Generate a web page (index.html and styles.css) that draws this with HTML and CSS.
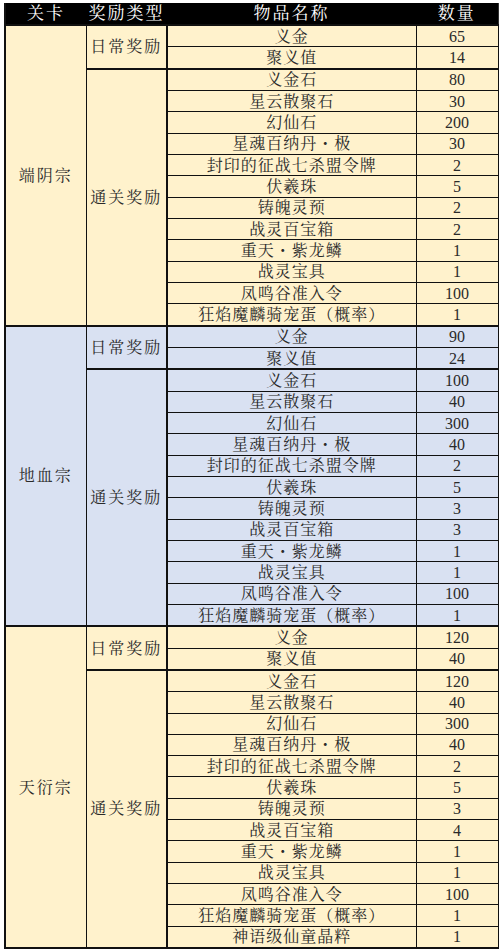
FILE: index.html
```html
<!DOCTYPE html>
<html lang="zh-CN">
<head>
<meta charset="utf-8">
<link rel="stylesheet" href="styles.css">
</head>
<body>
<table class="rewards">
<colgroup><col class="c1"><col class="c2"><col class="c3"><col class="c4"></colgroup>
<thead>
<tr><th>关卡</th><th>奖励类型</th><th>物品名称</th><th>数量</th></tr>
</thead>
<tbody class="sec yellow">
<tr><td class="stage" rowspan="14">端阴宗</td><td class="type" rowspan="2">日常奖励</td><td>义金</td><td class="num">65</td></tr>
<tr><td>聚义值</td><td class="num">14</td></tr>
<tr class="grp"><td class="type" rowspan="12">通关奖励</td><td>义金石</td><td class="num">80</td></tr>
<tr><td>星云散聚石</td><td class="num">30</td></tr>
<tr><td>幻仙石</td><td class="num">200</td></tr>
<tr><td>星魂百纳丹・极</td><td class="num">30</td></tr>
<tr><td>封印的征战七杀盟令牌</td><td class="num">2</td></tr>
<tr><td>伏羲珠</td><td class="num">5</td></tr>
<tr><td>铸魄灵预</td><td class="num">2</td></tr>
<tr><td>战灵百宝箱</td><td class="num">2</td></tr>
<tr><td>重天・紫龙鳞</td><td class="num">1</td></tr>
<tr><td>战灵宝具</td><td class="num">1</td></tr>
<tr><td>凤鸣谷准入令</td><td class="num">100</td></tr>
<tr><td>狂焰魔麟骑宠蛋（概率）</td><td class="num">1</td></tr>
</tbody>
<tbody class="sec blue">
<tr><td class="stage" rowspan="14">地血宗</td><td class="type" rowspan="2">日常奖励</td><td>义金</td><td class="num">90</td></tr>
<tr><td>聚义值</td><td class="num">24</td></tr>
<tr class="grp"><td class="type" rowspan="12">通关奖励</td><td>义金石</td><td class="num">100</td></tr>
<tr><td>星云散聚石</td><td class="num">40</td></tr>
<tr><td>幻仙石</td><td class="num">300</td></tr>
<tr><td>星魂百纳丹・极</td><td class="num">40</td></tr>
<tr><td>封印的征战七杀盟令牌</td><td class="num">2</td></tr>
<tr><td>伏羲珠</td><td class="num">5</td></tr>
<tr><td>铸魄灵预</td><td class="num">3</td></tr>
<tr><td>战灵百宝箱</td><td class="num">3</td></tr>
<tr><td>重天・紫龙鳞</td><td class="num">1</td></tr>
<tr><td>战灵宝具</td><td class="num">1</td></tr>
<tr><td>凤鸣谷准入令</td><td class="num">100</td></tr>
<tr><td>狂焰魔麟骑宠蛋（概率）</td><td class="num">1</td></tr>
</tbody>
<tbody class="sec yellow">
<tr><td class="stage" rowspan="15">天衍宗</td><td class="type" rowspan="2">日常奖励</td><td>义金</td><td class="num">120</td></tr>
<tr><td>聚义值</td><td class="num">40</td></tr>
<tr class="grp"><td class="type" rowspan="13">通关奖励</td><td>义金石</td><td class="num">120</td></tr>
<tr><td>星云散聚石</td><td class="num">40</td></tr>
<tr><td>幻仙石</td><td class="num">300</td></tr>
<tr><td>星魂百纳丹・极</td><td class="num">40</td></tr>
<tr><td>封印的征战七杀盟令牌</td><td class="num">2</td></tr>
<tr><td>伏羲珠</td><td class="num">5</td></tr>
<tr><td>铸魄灵预</td><td class="num">3</td></tr>
<tr><td>战灵百宝箱</td><td class="num">4</td></tr>
<tr><td>重天・紫龙鳞</td><td class="num">1</td></tr>
<tr><td>战灵宝具</td><td class="num">1</td></tr>
<tr><td>凤鸣谷准入令</td><td class="num">100</td></tr>
<tr><td>狂焰魔麟骑宠蛋（概率）</td><td class="num">1</td></tr>
<tr><td>神语级仙童晶粹</td><td class="num">1</td></tr>
</tbody>
</table>
</body>
</html>
```
FILE: styles.css
```css
html, body {
  margin: 0;
  padding: 0;
  background: #ffffff;
}
body {
  padding: 3px 0 0 4px;
}
.rewards {
  border-collapse: collapse;
  table-layout: fixed;
  width: 493px;
  font-family: "Liberation Serif", "Noto Serif CJK SC", "Noto Sans CJK SC", serif;
  font-size: 16px;
  color: #2a2a2a;
  border: 2px solid #111;
  border-top: 0;
  border-right: 1px solid #333;
}
.c1 { width: 81px; }
.c2 { width: 81px; }
.c3 { width: 249px; }
.c4 { width: 82px; }
.rewards th {
  background: #000;
  color: #fff;
  height: 21px;
  padding: 0;
  font-weight: normal;
  font-size: 17px;
  letter-spacing: 2px;
  line-height: 21px;
  text-align: center;
  border: none;
}
.rewards td {
  height: 20.33px;
  padding: 0;
  line-height: 19px;
  text-align: center;
  vertical-align: middle;
  border: 1px solid #111;
  letter-spacing: 1px;
  white-space: nowrap;
  overflow: hidden;
}
.rewards td.stage,
.rewards td.type {
  letter-spacing: 2px;
}
.rewards td.type {
  border-left: 1px solid #222;
  border-right: 2px solid #111;
}
.rewards td.num {
  letter-spacing: 0;
}
.sec {
  border-top: 2px solid #111;
}
.sec tr:first-child td {
  border-top: 2px solid #111;
}
.grp td {
  border-top: 2px solid #111;
}
.yellow td {
  background: #fff2cc;
}
.blue td {
  background: #d9e1f2;
}
```
